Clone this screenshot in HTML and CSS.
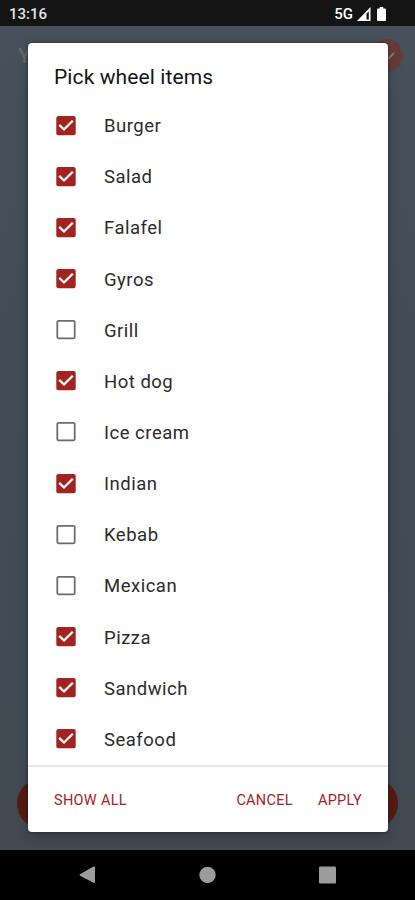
FILE: index.html
```html
<!DOCTYPE html>
<html lang="en">
<head>
<meta charset="utf-8">
<title>Pick wheel items</title>
<link rel="stylesheet" href="styles.css">
</head>
<body>
<svg width="0" height="0" class="defs">
  <symbol id="on" viewBox="0 0 20 20"><rect x=".3" y="0" width="19.4" height="19.2" rx="2" fill="#a32320"/><path d="M3.200 8.900 8 13.500 16.800 4.700" fill="none" stroke="#fff" stroke-width="2.300"/></symbol>
  <symbol id="off" viewBox="0 0 20 20"><rect x="1.3" y=".9" width="17.4" height="17.4" rx="1.2" fill="#fff" stroke="#6c6c6c" stroke-width="1.800"/></symbol>
</svg>
<div class="phone">
  <header class="status">
    <span class="clock">13:16</span>
    <span class="network">5G</span>
    <svg class="signal" width="14" height="14" viewBox="0 0 14 14"><path d="M0 14 13.500 0V14Z" fill="#fff"/><path d="M9.500 6.500 11.800 4.500V12.500H9.500Z" fill="#141414"/></svg>
    <svg class="battery" width="9" height="14" viewBox="0 0 9 14"><path d="M2.700 0h3.600v1.500H8q1 0 1 1V13q0 1-1 1H1q-1 0-1-1V2.500q0-1 1-1h1.700Z" fill="#fff"/></svg>
  </header>
  <main class="app">
    <div class="toolbar">
      <span class="app-title">Y</span>
      <span class="confirm"><svg width="33" height="33" viewBox="0 0 33 33"><path d="m11 16 6 5 7-7" fill="none" stroke="#8b7775" stroke-width="2"/></svg></span>
    </div>
    <div class="spin"></div>
    <section class="dialog">
      <h1>Pick wheel items</h1>
      <ul>
        <li><svg><use href="#on"/></svg><span>Burger</span></li>
        <li><svg><use href="#on"/></svg><span>Salad</span></li>
        <li><svg><use href="#on"/></svg><span>Falafel</span></li>
        <li><svg><use href="#on"/></svg><span>Gyros</span></li>
        <li><svg><use href="#off"/></svg><span>Grill</span></li>
        <li><svg><use href="#on"/></svg><span>Hot dog</span></li>
        <li><svg><use href="#off"/></svg><span>Ice cream</span></li>
        <li><svg><use href="#on"/></svg><span>Indian</span></li>
        <li><svg><use href="#off"/></svg><span>Kebab</span></li>
        <li><svg><use href="#off"/></svg><span>Mexican</span></li>
        <li><svg><use href="#on"/></svg><span>Pizza</span></li>
        <li><svg><use href="#on"/></svg><span>Sandwich</span></li>
        <li><svg><use href="#on"/></svg><span>Seafood</span></li>
      </ul>
      <footer class="actions">
        <span class="show">SHOW ALL</span>
        <span class="cancel">CANCEL</span>
        <span class="apply">APPLY</span>
      </footer>
    </section>
  </main>
  <nav class="nav">
    <svg width="17" height="18" viewBox="0 0 17 18"><path d="M1 8.200 14.500.600Q16 0 16 1.500V16Q16 17.500 14.500 16.800L1 9.800Q0 9 1 8.200Z"/></svg>
    <svg width="17" height="18" viewBox="0 0 17 18"><circle cx="8.500" cy="9" r="8.200"/></svg>
    <svg width="17" height="18" viewBox="0 0 17 18"><rect width="17" height="17" y=".5" rx="1.200"/></svg>
  </nav>
</div>
</body>
</html>
```
FILE: styles.css
```css
* { box-sizing: border-box; margin: 0; padding: 0; }
body { font-family: Roboto, sans-serif; overflow: hidden; }
svg { display: block; flex: none; }
.defs { position: absolute; }
.phone { width: 415px; height: 900px; display: flex; flex-direction: column; background: #000; }
.status { height: 26px; flex: none; background: #141414; color: #fff; display: flex; align-items: center; padding: 1px 29px 0 9px; font-size: 15px; font-weight: 500; }
.clock { color: #e2e2e2; margin-right: auto; }
.network { font-size: 15px; }
.signal { margin-left: 4px; }
.battery { margin-left: 6px; }
.app { position: relative; flex: 1; display: flex; flex-direction: column; justify-content: space-between; background: linear-gradient(#46515b, #414c56 50%, #424b54); }
.toolbar { display: flex; justify-content: space-between; align-items: center; padding: 13px 12px 0 18px; }
.app-title { color: #66696b; font-size: 21px; font-weight: 500; }
.confirm { width: 33px; height: 33px; border-radius: 50%; background: #683b38; }
.spin { height: 51px; margin: 0 17px 21px; border-radius: 26px; background: #591a10; }
.dialog { position: absolute; left: 28px; top: 16.500px; width: 360px; height: 789.500px; border-radius: 4px; background: #fff; box-shadow: 0 0 3px #1b2a35, 0 6px 14px rgba(0, 0, 0, .22); display: flex; flex-direction: column; }
h1 { height: 57.500px; flex: none; padding: 21.500px 26px 0; font-size: 21px; line-height: 27px; font-weight: 400; color: #151515; letter-spacing: .1px; }
ul { list-style: none; height: 665px; display: grid; grid-template-rows: repeat(13, 1fr); }
li { display: flex; align-items: center; gap: 28px; padding-left: 28px; color: #2b2b2b; font-size: 18.500px; letter-spacing: .5px; }
li svg { width: 20px; height: 20px; }
li span { padding-top: 1px; }
.actions { flex: 1; border-top: 2px solid #e8e8e8; display: flex; align-items: center; padding: 2px 26px 0; color: #a32320; font-size: 14.500px; letter-spacing: .3px; }
.show { margin-right: auto; }
.cancel { margin-right: 25px; }
.nav { height: 50px; flex: none; background: #000; fill: #9c9c9c; display: flex; justify-content: space-between; align-items: center; padding: 0 79px; }
```
